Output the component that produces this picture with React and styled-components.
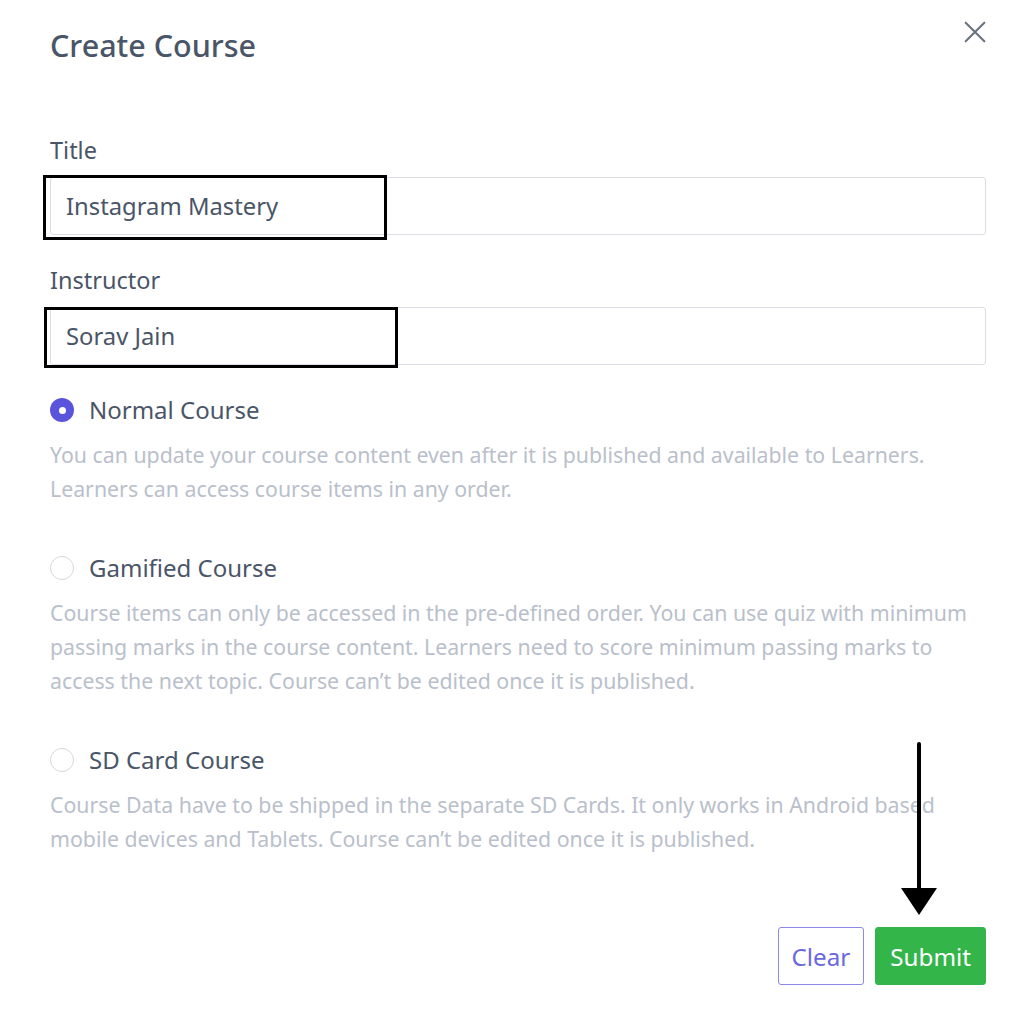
import React from 'react';
import styled, { createGlobalStyle } from 'styled-components';

const Global = createGlobalStyle`
  body {
    margin: 0;
    background: #fff;
    font-family: "Noto Sans", "Open Sans", sans-serif;
  }
`;

const Modal = styled.div`
  position: relative;
  width: 1032px;
  height: 1028px;
  box-sizing: border-box;
  padding: 27px 46px 0 50px;
  background: #fff;
`;

const Header = styled.div`
  display: flex;
  justify-content: space-between;
  align-items: flex-start;
`;

const Heading = styled.h2`
  margin: 0;
  font-size: 30.5px;
  line-height: 36px;
  font-weight: 500;
  color: #4a5568;
`;

const Close = styled.button`
  margin: -15px -9px 0 0;
  padding: 4px;
  border: 0;
  background: none;
  color: #6b7280;
  display: flex;
`;

const Field = styled.div`
  position: relative;
  margin-top: ${p => p.$top}px;
`;

const Label = styled.div`
  font-size: 23.5px;
  line-height: 30px;
  color: #4a5568;
  margin-bottom: 12px;
`;

const Input = styled.div`
  height: 58px;
  box-sizing: border-box;
  border: 1px solid #dadde3;
  border-radius: 3px;
  padding: 0 15px;
  display: flex;
  align-items: center;
  font-size: 23.8px;
  color: #4a5568;
`;

const Highlight = styled.div`
  position: absolute;
  left: ${p => p.$left}px;
  top: ${p => p.$top}px;
  width: ${p => p.$w}px;
  height: ${p => p.$h}px;
  border: 3px solid #000;
  box-sizing: border-box;
  pointer-events: none;
`;

const Option = styled.div`
  margin-top: ${p => p.$top}px;
`;

const OptionRow = styled.label`
  display: flex;
  align-items: center;
  gap: 15px;
  font-size: 24px;
  line-height: 30px;
  color: #4a5568;
`;

const Radio = styled.span`
  width: 24px;
  height: 24px;
  box-sizing: border-box;
  border-radius: 50%;
  flex: none;
  display: flex;
  align-items: center;
  justify-content: center;
  background: ${p => (p.$checked ? '#5a54dc' : '#fff')};
  border: ${p => (p.$checked ? 'none' : '1.5px solid #d5d8de')};
  &::after {
    content: '';
    width: 7px;
    height: 7px;
    border-radius: 50%;
    background: #fff;
    display: ${p => (p.$checked ? 'block' : 'none')};
  }
`;

const Desc = styled.p`
  margin: 13px 0 0;
  font-size: 21.3px;
  line-height: 34px;
  color: #b9c0cb;
  white-space: nowrap;
`;

const Footer = styled.div`
  display: flex;
  justify-content: flex-end;
  gap: 11px;
  margin-top: 71px;
`;

const Button = styled.button`
  height: 58px;
  padding: 0 ${p => (p.$primary ? 14 : 13)}px;
  border-radius: 3px;
  font-family: inherit;
  font-size: 24.2px;
  border: 1.5px solid ${p => (p.$primary ? '#33b54a' : '#8b87ec')};
  background: ${p => (p.$primary ? '#33b54a' : '#fff')};
  color: ${p => (p.$primary ? '#fff' : '#6c68e0')};
`;

const Arrow = styled.svg`
  position: absolute;
  left: 898px;
  top: 742px;
`;

const options = [
  {
    title: 'Normal Course',
    checked: true,
    top: 30,
    lines: [
      'You can update your course content even after it is published and available to Learners.',
      'Learners can access course items in any order.',
    ],
  },
  {
    title: 'Gamified Course',
    top: 47,
    lines: [
      'Course items can only be accessed in the pre-defined order. You can use quiz with minimum',
      'passing marks in the course content. Learners need to score minimum passing marks to',
      'access the next topic. Course can\u2019t be edited once it is published.',
    ],
  },
  {
    title: 'SD Card Course',
    top: 47,
    lines: [
      'Course Data have to be shipped in the separate SD Cards. It only works in Android based',
      'mobile devices and Tablets. Course can\u2019t be edited once it is published.',
    ],
  },
];

export default function App() {
  return (
    <>
      <Global />
      <Modal>
        <Header>
          <Heading>Create Course</Heading>
          <Close aria-label="Close">
            <svg width="32" height="32" viewBox="0 0 24 24" fill="none" stroke="currentColor" strokeWidth="1.6" strokeLinecap="round">
              <path d="M5 5l14 14M19 5L5 19" />
            </svg>
          </Close>
        </Header>

        <Field $top={72}>
          <Label>Title</Label>
          <Input>Instagram Mastery</Input>
          <Highlight $left={-7} $top={40} $w={344} $h={65} />
        </Field>

        <Field $top={30}>
          <Label>Instructor</Label>
          <Input>Sorav Jain</Input>
          <Highlight $left={-6} $top={42} $w={354} $h={61} />
        </Field>

        {options.map(o => (
          <Option key={o.title} $top={o.top}>
            <OptionRow>
              <Radio $checked={o.checked} />
              {o.title}
            </OptionRow>
            <Desc>
              {o.lines.map((l, i) => (
                <React.Fragment key={i}>
                  {i > 0 && <br />}
                  {l}
                </React.Fragment>
              ))}
            </Desc>
          </Option>
        ))}

        <Footer>
          <Button>Clear</Button>
          <Button $primary>Submit</Button>
        </Footer>

        <Arrow width="42" height="176" viewBox="0 0 42 176">
          <line x1="21" y1="2" x2="21" y2="150" stroke="#000" strokeWidth="4" strokeLinecap="round" />
          <polygon points="3,146 39,146 21,173" fill="#000" />
        </Arrow>
      </Modal>
    </>
  );
}
